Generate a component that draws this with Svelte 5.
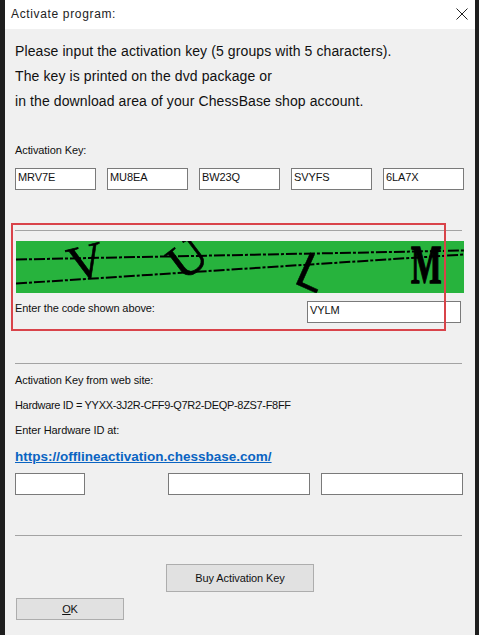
<script>
  const keys = ['MRV7E', 'MU8EA', 'BW23Q', 'SVYFS', '6LA7X'];
</script>

<div class="window">
  <header class="title">
    <span class="caption">Activate program:</span>
    <svg class="close" viewBox="0 0 12 12" width="12" height="12" aria-hidden="true">
      <path d="M0.5 0.5 L11.5 11.5 M11.5 0.5 L0.5 11.5" />
    </svg>
  </header>

  <main class="content">
    <section class="intro">
      <p>Please input the activation key (5 groups with 5 characters).</p>
      <p>The key is printed on the dvd package or</p>
      <p>in the download area of your ChessBase shop account.</p>
    </section>

    <p class="label key-label">Activation Key:</p>
    <div class="key-row">
      {#each keys as key}
        <div class="field">{key}</div>
      {/each}
    </div>

    <div class="captcha-block">
      <hr class="first-rule" />
      <svg class="captcha" viewBox="0 0 448 52" width="448" height="52" role="img" aria-label="Captcha">
        <rect width="448" height="52" fill="#27b33d" />
        <g class="noise">
          <line x1="0" y1="18.5" x2="448" y2="9.5" />
          <line x1="0" y1="42.5" x2="448" y2="13.5" />
        </g>
        <text class="c-v" transform="translate(56.5 41.4) rotate(-14)">V</text>
        <text class="c-u" transform="translate(167 41) rotate(-37)">U</text>
        <text class="c-l" transform="translate(276.4 41.4) rotate(24)">L</text>
        <text class="c-m" transform="translate(395 42) scale(0.6 1)">M</text>
      </svg>
      <div class="code-row">
        <span class="label">Enter the code shown above:</span>
        <div class="field code">VYLM</div>
      </div>
      <div class="highlight"></div>
    </div>

    <hr class="second-rule" />

    <section class="web">
      <p class="label">Activation Key from web site:</p>
      <p class="label hardware">Hardware ID = YYXX-3J2R-CFF9-Q7R2-DEQP-8ZS7-F8FF</p>
      <p class="label">Enter Hardware ID at:</p>
      <a class="link" href="https://offlineactivation.chessbase.com/">https://offlineactivation.chessbase.com/</a>
    </section>

    <div class="web-row">
      <div class="field short"></div>
      <div class="field long"></div>
      <div class="field long"></div>
    </div>

    <hr class="third-rule" />

    <div class="actions">
      <button class="buy">Buy Activation Key</button>
      <button class="ok"><u>O</u>K</button>
    </div>
  </main>
</div>

<style>
  :global(body) {
    margin: 0;
    background: #1e1e1e;
  }
  .window {
    box-sizing: border-box;
    width: 470px;
    height: 635px;
    margin-left: 5px;
    background: #f0f0f0;
    font-family: "Liberation Sans", Arial, sans-serif;
    color: #111;
    overflow: hidden;
  }
  .title {
    height: 29px;
    background: #fff;
    display: flex;
    align-items: center;
    justify-content: space-between;
    padding: 0 7px 1px 6px;
    box-sizing: border-box;
  }
  .caption {
    font-size: 12px;
    letter-spacing: 0.65px;
    color: #222;
  }
  .close path {
    stroke: #222;
    stroke-width: 1;
    fill: none;
  }
  .content {
    padding: 10px 10px 0;
  }
  p {
    margin: 0;
  }
  .intro p {
    font-size: 14px;
    line-height: 25px;
    height: 25px;
    letter-spacing: 0.1px;
  }
  .label {
    font-size: 11px;
    line-height: 16px;
    letter-spacing: -0.1px;
  }
  .key-label {
    margin-top: 28px;
  }
  .key-row {
    display: grid;
    grid-template-columns: repeat(5, 81px);
    gap: 11px;
    margin-top: 10px;
  }
  .field {
    box-sizing: border-box;
    height: 22px;
    background: #fff;
    border: 1px solid #7a7a7a;
    font-size: 11px;
    line-height: 17px;
    letter-spacing: -0.1px;
    padding-left: 2px;
  }
  hr {
    border: 0;
    height: 1px;
    background: #a3a3a3;
    width: 447px;
    margin: 0;
  }
  .captcha-block {
    position: relative;
    margin-top: 40px;
  }
  .captcha {
    display: block;
    margin: 10px 0 0 1px;
  }
  .noise line {
    stroke: #000;
    stroke-width: 2;
    stroke-dasharray: 11 2 3 2;
  }
  .c-v,
  .c-u {
    font-family: "Liberation Serif", serif;
    font-size: 50px;
    stroke: #000;
    stroke-width: 0.6;
  }
  .c-l {
    font-family: "Liberation Sans", sans-serif;
    font-size: 50px;
    stroke: #000;
    stroke-width: 0.5;
  }
  .c-m {
    font-family: "Liberation Serif", serif;
    font-size: 54px;
    font-weight: 700;
    stroke: #000;
    stroke-width: 1.4;
  }
  .code-row {
    display: flex;
    justify-content: space-between;
    margin-top: 8px;
    padding-right: 4px;
  }
  .code-row .label {
    line-height: 14px;
  }
  .code {
    width: 154px;
  }
  .highlight {
    position: absolute;
    left: -4px;
    top: -7px;
    width: 431px;
    height: 104px;
    border: 2px solid #d9434a;
    pointer-events: none;
  }
  .second-rule {
    margin-top: 40px;
  }
  .web {
    margin-top: 4px;
  }
  .web .label {
    height: 25px;
    line-height: 25px;
  }
  .web .hardware {
    letter-spacing: -0.32px;
  }
  .link {
    display: block;
    height: 25px;
    line-height: 25px;
    font-size: 13.5px;
    font-weight: 700;
    color: #0a64c2;
    margin-top: 1px;
  }
  .web-row {
    display: flex;
    margin-top: 4px;
  }
  .short {
    flex: none;
    width: 70px;
    margin-right: 83px;
  }
  .long {
    flex: none;
    width: 142px;
    margin-right: 11px;
  }
  .third-rule {
    margin-top: 40px;
  }
  .actions {
    display: flex;
    flex-direction: column;
    align-items: flex-start;
    margin-top: 28px;
  }
  button {
    box-sizing: border-box;
    background: #e1e1e1;
    border: 1px solid #adadad;
    font-family: inherit;
    font-size: 11px;
    letter-spacing: -0.1px;
    color: #111;
    padding: 0;
  }
  .buy {
    width: 148px;
    height: 28px;
    margin-left: 151px;
  }
  .ok {
    width: 108px;
    height: 22px;
    margin: 6px 0 0 1px;
  }
</style>
